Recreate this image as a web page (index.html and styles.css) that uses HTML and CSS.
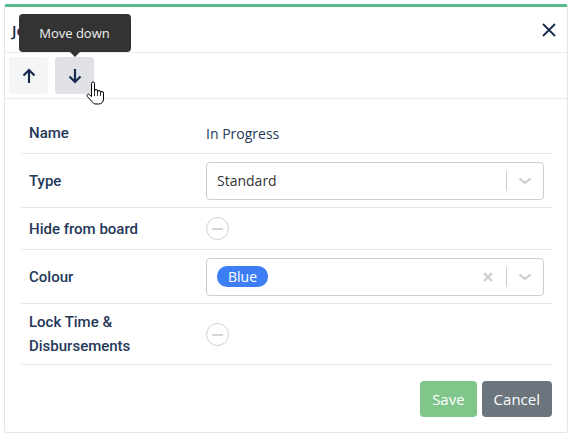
FILE: index.html
```html
<!DOCTYPE html>
<html lang="en">
<head>
  <meta charset="UTF-8">
  <meta name="viewport" content="width=device-width, initial-scale=1.0">
  <title>Job State</title>
  <link rel="stylesheet" href="styles.css">
</head>
<body>
  <div class="panel">
    <div class="panel-header">
      <h2 class="panel-title">Job State</h2>
      <button class="close-btn" aria-label="Close">
        <svg width="14" height="14" viewBox="0 0 14 14"><path d="M1 1L13 13M13 1L1 13" stroke="#172b4d" stroke-width="1.8" fill="none"/></svg>
      </button>
    </div>

    <div class="toolbar">
      <button class="tool-btn" aria-label="Move up">
        <svg width="14" height="16" viewBox="0 0 14 16"><path d="M7 15V2M1.5 7.5L7 2l5.5 5.5" stroke="#172b4d" stroke-width="2.2" fill="none"/></svg>
      </button>
      <div class="tool-wrap">
        <button class="tool-btn hover" aria-label="Move down">
          <svg width="14" height="16" viewBox="0 0 14 16"><path d="M7 1v13M1.5 8.5L7 14l5.5-5.5" stroke="#172b4d" stroke-width="2.2" fill="none"/></svg>
        </button>
        <div class="tooltip">Move down</div>
        <svg class="cursor" width="20" height="24" viewBox="0 0 20 24">
          <path d="M6.5 2.5a1.5 1.5 0 0 1 3 0V10a1.5 1.5 0 0 1 3 0v1a1.5 1.5 0 0 1 3 0v1a1.5 1.5 0 0 1 3 0v6c0 3-2 5-5 5h-2.5c-2 0-3-1-4-2.5L2.3 15.5a1.4 1.4 0 0 1 2.2-1.8l2 1.8Z" fill="#fff" stroke="#000" stroke-width="1"/>
          <path d="M9.5 10v5M12.5 11v4M15.5 12v3" stroke="#000" stroke-width="0.8"/>
        </svg>
      </div>
    </div>

    <div class="details">
      <div class="row first">
        <div class="label">Name</div>
        <div class="value">In Progress</div>
      </div>
      <div class="row field">
        <div class="label">Type</div>
        <div class="value">
          <div class="select">
            <span class="select-text">Standard</span>
            <span class="sep"></span>
            <span class="chevron"><svg width="14" height="8" viewBox="0 0 14 8"><path d="M1.5 1.5L7 6l5.5-4.5" stroke="#ccc" stroke-width="2" fill="none"/></svg></span>
          </div>
        </div>
      </div>
      <div class="row">
        <div class="label">Hide from board</div>
        <div class="value"><span class="toggle"></span></div>
      </div>
      <div class="row field">
        <div class="label">Colour</div>
        <div class="value">
          <div class="select">
            <span class="select-text"><span class="pill">Blue</span></span>
            <span class="clear"><svg width="10" height="10" viewBox="0 0 10 10"><path d="M1 1l8 8M9 1L1 9" stroke="#ccc" stroke-width="2" fill="none"/></svg></span>
            <span class="sep"></span>
            <span class="chevron"><svg width="14" height="8" viewBox="0 0 14 8"><path d="M1.5 1.5L7 6l5.5-4.5" stroke="#ccc" stroke-width="2" fill="none"/></svg></span>
          </div>
        </div>
      </div>
      <div class="row tall">
        <div class="label">Lock Time &amp; Disbursements</div>
        <div class="value"><span class="toggle"></span></div>
      </div>
    </div>

    <div class="panel-footer">
      <button class="btn btn-save">Save</button>
      <button class="btn btn-cancel">Cancel</button>
    </div>
  </div>
</body>
</html>
```

FILE: styles.css
```css
body {
  margin: 0;
  font-family: 'Open Sans', 'Noto Sans', sans-serif;
  font-size: 14px;
  background-color: #fff;
  color: #172b4d;
}

.panel {
  margin: 4px;
  width: 562px;
  border: 1px solid #e6e6e6;
  border-top: 3px solid #57bb8a;
  border-radius: 3px;
  background-color: #fff;
}

.panel-header {
  display: flex;
  align-items: center;
  justify-content: space-between;
  height: 45px;
  padding: 0 11px 0 7px;
  border-bottom: 1px solid #ebebeb;
}

.panel-title {
  margin: 0;
  font-size: 15px;
  font-weight: 600;
  color: #172b4d;
}

.close-btn {
  background: none;
  border: none;
  padding: 0;
  display: flex;
}

.toolbar {
  display: flex;
  gap: 7px;
  padding: 4px 4px;
  border-bottom: 1px solid #ebebeb;
}

.tool-wrap {
  position: relative;
}

.tool-btn {
  width: 39px;
  height: 37px;
  border: none;
  border-radius: 3px;
  background-color: #f4f5f7;
  display: flex;
  align-items: center;
  justify-content: center;
  padding: 0;
}

.tool-btn.hover {
  background-color: #dfe1e6;
}

.tooltip {
  position: absolute;
  bottom: calc(100% + 5px);
  left: 50%;
  transform: translateX(-50%);
  width: 112px;
  height: 38px;
  line-height: 38px;
  text-align: center;
  background-color: #333;
  color: #f0f0f0;
  font-size: 13px;
  border-radius: 4px;
}

.tooltip::after {
  content: '';
  position: absolute;
  top: 100%;
  left: 50%;
  margin-left: -5px;
  border: 5px solid transparent;
  border-top-color: #333;
}

.cursor {
  position: absolute;
  left: 30px;
  top: 24px;
}

.details {
  margin: 14px 15px 0 16px;
}

.row {
  display: grid;
  grid-template-columns: 185px 1fr;
  align-items: center;
  border-bottom: 1px solid #e6e6e6;
  min-height: 41px;
}

.row.first {
  min-height: 40px;
}

.row.field {
  min-height: 53px;
}

.row.tall {
  min-height: 60px;
}

.label {
  padding: 0 50px 0 8px;
  font-family: Roboto, 'Open Sans', sans-serif;
  font-size: 15px;
  font-weight: 500;
  color: #253858;
  line-height: 24px;
}

.value {
  padding-right: 8px;
  color: #253858;
}

.select {
  display: flex;
  align-items: center;
  height: 36px;
  border: 1px solid #ccc;
  border-radius: 4px;
  padding-left: 10px;
  color: #333;
}

.select-text {
  flex: 1;
}

.pill {
  display: inline-block;
  background-color: #3d7ef5;
  color: #fff;
  border-radius: 10px;
  padding: 0 11px;
  line-height: 21px;
}

.clear {
  display: flex;
  padding: 0 13px;
}

.sep {
  width: 1px;
  height: 20px;
  background-color: #ccc;
}

.chevron {
  display: flex;
  justify-content: center;
  width: 36px;
}

.toggle {
  display: block;
  position: relative;
  width: 21px;
  height: 21px;
  border: 1px solid #cfcfcf;
  border-radius: 50%;
}

.toggle::after {
  content: '';
  position: absolute;
  left: 5px;
  top: 10px;
  width: 11px;
  height: 2px;
  background-color: #d4d4d4;
}

.panel-footer {
  display: flex;
  justify-content: flex-end;
  gap: 5px;
  padding: 16px 15px 15px;
}

.btn {
  height: 36px;
  border: none;
  border-radius: 4px;
  color: #fff;
  font-family: inherit;
  font-size: 15px;
  padding: 0 12px;
}

.btn-save {
  background-color: #80c68b;
}

.btn-cancel {
  background-color: #6c757d;
}
```
